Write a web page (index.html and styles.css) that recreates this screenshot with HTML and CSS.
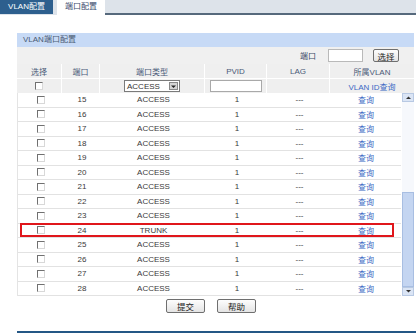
FILE: index.html
```html
<!DOCTYPE html>
<html lang="zh">
<head>
<meta charset="utf-8">
<link rel="stylesheet" href="styles.css">
</head>
<body>
<div class="tabs">
  <div class="tab tab-dark">VLAN配置</div>
  <div class="tab tab-active">端口配置</div>
  <div class="tab-rest"></div>
</div>
<div class="panel">
  <div class="panel-title">VLAN端口配置</div>
  <div class="toolbar">
    <span class="tb-label">端口</span>
    <span class="tb-input"></span>
    <span class="btn btn-small">选择</span>
  </div>
  <div class="row head">
    <div class="c c1">选择</div>
    <div class="c c2">端口</div>
    <div class="c c3">端口类型</div>
    <div class="c c4">PVID</div>
    <div class="c c5">LAG</div>
    <div class="c c6">所属VLAN</div>
  </div>
  <div class="row head filter">
    <div class="c c1"><span class="cb"></span></div>
    <div class="c c2"></div>
    <div class="c c3"><span class="select"><span class="sel-text">ACCESS</span><span class="sel-arrow"><svg width="7" height="7" viewBox="0 0 7 7"><path d="M1 2.5h5L3.5 5z" fill="#222"/></svg></span></span></div>
    <div class="c c4"><span class="pvid-input"></span></div>
    <div class="c c5"></div>
    <div class="c c6 link">VLAN ID查询</div>
  </div>
  <div class="body-wrap">
    <div class="rows">
      <div class="row data"><div class="c c1"><span class="cb"></span></div><div class="c c2">15</div><div class="c c3">ACCESS</div><div class="c c4">1</div><div class="c c5">---</div><div class="c c6 link">查询</div></div>
      <div class="row data"><div class="c c1"><span class="cb"></span></div><div class="c c2">16</div><div class="c c3">ACCESS</div><div class="c c4">1</div><div class="c c5">---</div><div class="c c6 link">查询</div></div>
      <div class="row data"><div class="c c1"><span class="cb"></span></div><div class="c c2">17</div><div class="c c3">ACCESS</div><div class="c c4">1</div><div class="c c5">---</div><div class="c c6 link">查询</div></div>
      <div class="row data"><div class="c c1"><span class="cb"></span></div><div class="c c2">18</div><div class="c c3">ACCESS</div><div class="c c4">1</div><div class="c c5">---</div><div class="c c6 link">查询</div></div>
      <div class="row data"><div class="c c1"><span class="cb"></span></div><div class="c c2">19</div><div class="c c3">ACCESS</div><div class="c c4">1</div><div class="c c5">---</div><div class="c c6 link">查询</div></div>
      <div class="row data"><div class="c c1"><span class="cb"></span></div><div class="c c2">20</div><div class="c c3">ACCESS</div><div class="c c4">1</div><div class="c c5">---</div><div class="c c6 link">查询</div></div>
      <div class="row data"><div class="c c1"><span class="cb"></span></div><div class="c c2">21</div><div class="c c3">ACCESS</div><div class="c c4">1</div><div class="c c5">---</div><div class="c c6 link">查询</div></div>
      <div class="row data"><div class="c c1"><span class="cb"></span></div><div class="c c2">22</div><div class="c c3">ACCESS</div><div class="c c4">1</div><div class="c c5">---</div><div class="c c6 link">查询</div></div>
      <div class="row data"><div class="c c1"><span class="cb"></span></div><div class="c c2">23</div><div class="c c3">ACCESS</div><div class="c c4">1</div><div class="c c5">---</div><div class="c c6 link">查询</div></div>
      <div class="row data marked"><div class="c c1"><span class="cb"></span></div><div class="c c2">24</div><div class="c c3">TRUNK</div><div class="c c4">1</div><div class="c c5">---</div><div class="c c6 link">查询</div><span class="redbox"></span></div>
      <div class="row data"><div class="c c1"><span class="cb"></span></div><div class="c c2">25</div><div class="c c3">ACCESS</div><div class="c c4">1</div><div class="c c5">---</div><div class="c c6 link">查询</div></div>
      <div class="row data"><div class="c c1"><span class="cb"></span></div><div class="c c2">26</div><div class="c c3">ACCESS</div><div class="c c4">1</div><div class="c c5">---</div><div class="c c6 link">查询</div></div>
      <div class="row data"><div class="c c1"><span class="cb"></span></div><div class="c c2">27</div><div class="c c3">ACCESS</div><div class="c c4">1</div><div class="c c5">---</div><div class="c c6 link">查询</div></div>
      <div class="row data"><div class="c c1"><span class="cb"></span></div><div class="c c2">28</div><div class="c c3">ACCESS</div><div class="c c4">1</div><div class="c c5">---</div><div class="c c6 link">查询</div></div>
    </div>
    <div class="scrollbar">
      <div class="sb-btn"><svg width="7" height="5" viewBox="0 0 7 5"><path d="M1 4h5L3.5 1.5z" fill="#333"/></svg></div>
      <div class="sb-track"></div>
      <div class="sb-thumb"></div>
      <div class="sb-btn"><svg width="7" height="5" viewBox="0 0 7 5"><path d="M1 1h5L3.5 3.5z" fill="#333"/></svg></div>
    </div>
  </div>
  <div class="actions">
    <span class="btn">提交</span>
    <span class="btn">帮助</span>
  </div>
</div>
<div class="bottom-line"></div>
</body>
</html>
```
FILE: styles.css
```css
* { box-sizing: border-box; }
html, body { margin: 0; padding: 0; background: #fff; }
body {
  width: 416px;
  height: 333px;
  overflow: hidden;
  font-family: "Liberation Sans", "Noto Sans CJK SC", sans-serif;
  font-size: 8px;
  color: #3a3a3a;
}
.tabs {
  display: flex;
  height: 15px;
  background: #dde3ea;
}
.tab {
  height: 14px;
  line-height: 14px;
  text-align: center;
  font-size: 8px;
}
.tab-dark {
  width: 53px;
  background: #2d5f8e;
  color: #fff;
}
.tab-active {
  width: 48px;
  margin-left: 4px;
  height: 15px;
  background: #fff;
  color: #3a4c6e;
}
.tab-rest {
  flex: 1;
  align-self: flex-end;
  height: 2px;
  background: #56697c;
}
.panel {
  margin: 18px 0 0 17px;
  width: 397px;
}
.panel-title {
  height: 14px;
  line-height: 14px;
  padding-left: 6px;
  background: #c7daf6;
  color: #4a5a74;
}
.toolbar {
  display: flex;
  align-items: center;
  justify-content: flex-end;
  height: 17px;
  background: #f0f0f0;
  padding-right: 15px;
}
.tb-label { margin-right: 12px; color: #3a4a66; }
.tb-input {
  width: 35px;
  height: 13px;
  background: #fff;
  border: 1px solid #b9b9b9;
  margin-right: 10px;
}
.btn {
  display: inline-flex;
  align-items: center;
  justify-content: center;
  width: 39px;
  height: 14px;
  border: 1px solid #6f6f6f;
  border-radius: 2px;
  background: linear-gradient(#fdfdfd, #e4e4e4);
  color: #222;
  font-size: 8.5px;
}
.btn-small { width: 26px; height: 13px; }
.row {
  display: flex;
  align-items: stretch;
}
.head {
  height: 14px;
  background: #efefef;
  color: #4a5a78;
}
.head .c { border-right: 1px solid #fff; }
.head .c6 { border-right: none; }
.filter { height: 15px; border-top: 1px solid #fff; }
.c {
  display: flex;
  align-items: center;
  justify-content: center;
  white-space: nowrap;
}
.c1 { width: 45px; }
.c2 { width: 38px; }
.c3 { width: 105px; }
.c4 { width: 62px; }
.c5 { width: 63px; }
.c6 { flex: 1; }
.cb {
  display: block;
  width: 8px;
  height: 8px;
  border: 1px solid #707070;
  border-right-color: #d8d8d8;
  border-bottom-color: #d8d8d8;
  background: #fff;
}
.select {
  display: flex;
  align-items: center;
  width: 56px;
  height: 12px;
  border: 1px solid #7a7a7a;
  background: #fff;
  padding-left: 2px;
  color: #333;
}
.sel-text { flex: 1; }
.sel-arrow {
  display: flex;
  align-items: center;
  justify-content: center;
  width: 9px;
  height: 8px;
  margin-right: 1px;
  background: #d4d4d4;
  border: 1px solid #888;
}
.pvid-input {
  width: 52px;
  height: 12px;
  background: #fff;
  border: 1px solid #a9a9a9;
}
.link { color: #3c69c4; }
.body-wrap {
  display: flex;
  height: 203px;
}
.rows {
  width: 384px;
  border-left: 1px solid #e4e4e4;
}
.data {
  position: relative;
  height: 14.5px;
  border-bottom: 1px solid #e2e2e2;
  background: #fff;
  color: #3a3a3a;
}
.data .link { color: #3c69c4; }
.redbox {
  position: absolute;
  left: 2px;
  top: -1px;
  width: 374px;
  height: 14px;
  border: 2px solid #e0161b;
}
.scrollbar {
  display: flex;
  flex-direction: column;
  width: 12px;
  margin-left: 1px;
  background: #f6f8fc;
}
.sb-btn {
  height: 9px;
  display: flex;
  align-items: center;
  justify-content: center;
  background: #dbe5f5;
  border: 1px solid #b8c9e3;
}
.sb-track { height: 90px; }
.sb-thumb {
  flex: 1;
  background: #c4d5f1;
  border: 1px solid #a8bee2;
}
.actions {
  display: flex;
  justify-content: center;
  gap: 12px;
  margin-top: 3px;
  padding-right: 9px;
}
.bottom-line {
  margin: 18px 0 0 17px;
  height: 2px;
  background: #245785;
}
```
